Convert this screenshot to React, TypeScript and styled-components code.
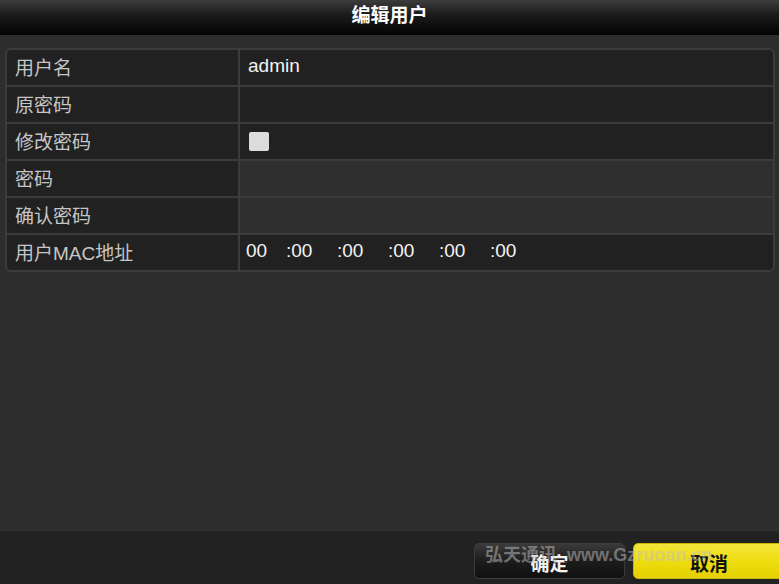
import styled, { createGlobalStyle } from 'styled-components';

const GlobalStyle = createGlobalStyle`
  html, body {
    margin: 0;
    padding: 0;
    background: #2d2d2d;
  }
  * {
    box-sizing: border-box;
  }
`;

const Window = styled.div`
  width: 779px;
  height: 584px;
  display: flex;
  flex-direction: column;
  background: #2d2d2d;
  font-family: "Liberation Sans", "Noto Sans CJK SC", sans-serif;
  position: relative;
  overflow: hidden;
`;

const TitleBar = styled.div`
  height: 35px;
  flex-shrink: 0;
  display: flex;
  align-items: center;
  justify-content: center;
  background: linear-gradient(to bottom, #3c3c3c 0%, #1a1a1a 45%, #050505 100%);
  border-bottom: 1px solid #000;
  color: #fff;
  font-size: 19px;
  font-weight: bold;
  padding-bottom: 8px;
`;

const Body = styled.div`
  flex: 1;
  padding: 13px 4px 0 5px;
`;

const Table = styled.div`
  display: grid;
  grid-template-columns: 231px 1fr;
  gap: 2px;
  background: #3b3b3b;
  border: 2px solid #3b3b3b;
  border-radius: 6px;
  overflow: hidden;
`;

const Label = styled.div`
  height: 35px;
  display: flex;
  align-items: center;
  padding: 0 0 3px 8px;
  background: #212121;
  color: #c6c6c6;
  font-size: 19px;
`;

const Value = styled.div<{ $disabled?: boolean }>`
  height: 35px;
  display: flex;
  align-items: center;
  padding: 0 0 3px 8px;
  background: ${(p) => (p.$disabled ? '#2f2f2f' : '#212121')};
  color: #f4f4f4;
  font-size: 19px;
`;

const Check = styled.span`
  width: 20px;
  height: 19px;
  margin: 3px 0 0 1px;
  background: #dcdcdc;
  border-radius: 2px;
`;

const Mac = styled.div`
  display: flex;
  margin-left: -2px;
`;

const MacPart = styled.span<{ $first?: boolean }>`
  width: ${(p) => (p.$first ? '40px' : '51px')};
  white-space: pre;
`;

const Footer = styled.div`
  height: 54px;
  flex-shrink: 0;
  background: #222;
  border-top: 1px solid #333;
  display: flex;
  align-items: center;
  justify-content: flex-end;
  gap: 8px;
  padding-top: 7px;
  margin-right: -6px;
`;

const Button = styled.div<{ $primary?: boolean }>`
  width: ${(p) => (p.$primary ? '152px' : '151px')};
  height: 36px;
  border-radius: 5px;
  display: flex;
  align-items: center;
  justify-content: center;
  padding-top: 2px;
  font-size: 19px;
  font-weight: bold;
  color: ${(p) => (p.$primary ? '#111' : '#f2f2f2')};
  background: ${(p) =>
    p.$primary
      ? 'linear-gradient(to bottom, #f4e63c 0%, #eedd10 50%, #e4d000 100%)'
      : 'linear-gradient(to bottom, #3a3a3a 0%, #1c1c1c 50%, #101010 100%)'};
  border: 1px solid ${(p) => (p.$primary ? '#c9b800' : '#3c3c3c')};
`;

const Watermark = styled.div`
  position: absolute;
  left: 485px;
  top: 540px;
  font-size: 18px;
  font-weight: bold;
  color: rgba(190, 190, 190, 0.5);
  white-space: nowrap;
  pointer-events: none;
`;

const macParts = ['00', ':00', ':00', ':00', ':00', ':00'];

export default function App() {
  return (
    <>
      <GlobalStyle />
      <Window>
        <TitleBar>编辑用户</TitleBar>
        <Body>
          <Table>
            <Label>用户名</Label>
            <Value>admin</Value>
            <Label>原密码</Label>
            <Value />
            <Label>修改密码</Label>
            <Value>
              <Check />
            </Value>
            <Label>密码</Label>
            <Value $disabled />
            <Label>确认密码</Label>
            <Value $disabled />
            <Label>用户MAC地址</Label>
            <Value>
              <Mac>
                {macParts.map((m, i) => (
                  <MacPart key={i} $first={i === 0}>
                    {m}
                  </MacPart>
                ))}
              </Mac>
            </Value>
          </Table>
        </Body>
        <Footer>
          <Button>确定</Button>
          <Button $primary>取消</Button>
        </Footer>
        <Watermark>弘天通讯_www.Gzruoan.cn</Watermark>
      </Window>
    </>
  );
}
